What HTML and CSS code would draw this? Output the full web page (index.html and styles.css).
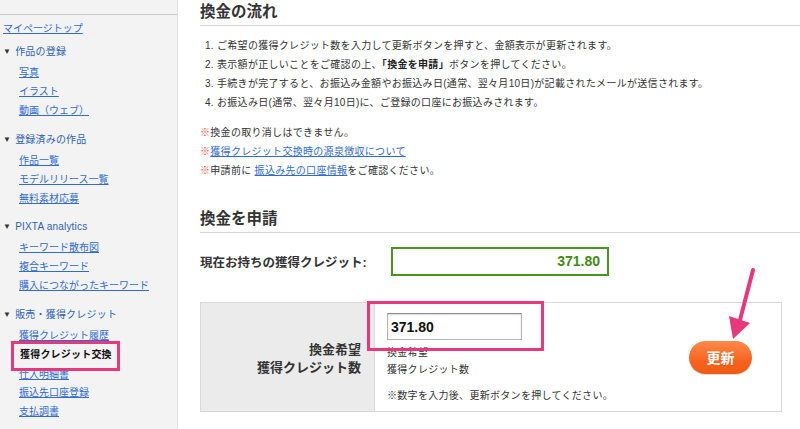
FILE: index.html
```html
<!DOCTYPE html>
<html lang="ja">
<head>
<meta charset="utf-8">
<link rel="stylesheet" href="styles.css">
</head>
<body>
<div class="page">
  <aside class="sidebar">
    <div class="side-inner">
      <a class="top-link" href="#">マイページトップ</a>
      <div class="group">
        <div class="group-head"><span class="tri">▼</span>作品の登録</div>
        <ul>
          <li><a href="#">写真</a></li>
          <li><a href="#">イラスト</a></li>
          <li><a href="#">動画（ウェブ）</a></li>
        </ul>
      </div>
      <div class="group">
        <div class="group-head"><span class="tri">▼</span>登録済みの作品</div>
        <ul>
          <li><a href="#">作品一覧</a></li>
          <li><a href="#">モデルリリース一覧</a></li>
          <li><a href="#">無料素材応募</a></li>
        </ul>
      </div>
      <div class="group">
        <div class="group-head"><span class="tri">▼</span>PIXTA analytics</div>
        <ul>
          <li><a href="#">キーワード散布図</a></li>
          <li><a href="#">複合キーワード</a></li>
          <li><a href="#">購入につながったキーワード</a></li>
        </ul>
      </div>
      <div class="group">
        <div class="group-head"><span class="tri">▼</span>販売・獲得クレジット</div>
        <ul>
          <li><a href="#">獲得クレジット履歴</a></li>
          <li class="active"><span>獲得クレジット交換</span></li>
          <li class="after-active"><a href="#">仕入明細書</a></li>
          <li><a href="#">振込先口座登録</a></li>
          <li><a href="#">支払調書</a></li>
        </ul>
      </div>
    </div>
  </aside>
  <main class="main">
    <h2 class="sec-title">換金の流れ</h2>
    <div class="steps">
      <p>1. ご希望の獲得クレジット数を入力して更新ボタンを押すと、金額表示が更新されます。</p>
      <p>2. 表示額が正しいことをご確認の上、<b>「換金を申請」</b>ボタンを押してください。</p>
      <p>3. 手続きが完了すると、お振込み金額やお振込み日(通常、翌々月10日)が記載されたメールが送信されます。</p>
      <p>4. お振込み日(通常、翌々月10日)に、ご登録の口座にお振込みされます。</p>
    </div>
    <div class="notes">
      <p><span class="mark">※</span>換金の取り消しはできません。</p>
      <p><span class="mark">※</span><a href="#">獲得クレジット交換時の源泉徴収について</a></p>
      <p><span class="mark">※</span>申請前に <a href="#">振込み先の口座情報</a>をご確認ください。</p>
    </div>
    <h2 class="sec-title second">換金を申請</h2>
    <div class="credit-row">
      <div class="credit-label">現在お持ちの獲得クレジット:</div>
      <div class="credit-box">371.80</div>
    </div>
    <div class="apply">
      <div class="apply-label">換金希望<br>獲得クレジット数</div>
      <div class="apply-body">
        <div class="apply-form">
          <div class="input-wrap">
            <input class="amount" type="text" value="371.80">
            <div class="highlight"></div>
          </div>
          <div class="sub">換金希望<br>獲得クレジット数</div>
          <div class="hint">※数字を入力後、更新ボタンを押してください。</div>
        </div>
        <button class="update">更新</button>
      </div>
    </div>
  </main>
</div>
<svg class="arrow" width="40" height="80" viewBox="720 265 40 80">
  <line x1="753" y1="270" x2="740" y2="320" stroke="#e8387c" stroke-width="4" stroke-linecap="round"/>
  <polygon points="729,316 750,323 733,339" fill="#e8387c"/>
</svg>
</body>
</html>
```

FILE: styles.css
```css
* { box-sizing: border-box; }
html, body { margin: 0; padding: 0; }
body {
  font-family: "Liberation Sans", "Noto Sans CJK JP", sans-serif;
  color: #333;
  background: #fff;
  width: 800px;
  height: 429px;
  overflow: hidden;
  position: relative;
}
.page { display: flex; height: 429px; }
.sidebar {
  width: 178px;
  flex: none;
  background: #f4f3f3;
  border-right: 1px solid #e2e2e2;
  padding-top: 14px;
}
.side-inner {
  border-top: 1px solid #c9c9c9;
  font-size: 10px;
  line-height: 19px;
  padding-top: 4px;
}
a { color: #2f6bd3; text-decoration: underline; }
.top-link { display: block; padding-left: 3px; margin-bottom: 4px; }
.group { margin-bottom: 9.5px; }
.group-head { color: #2c62bd; padding-left: 3px; letter-spacing: 0.2px; }
.tri { font-size: 8px; color: #333; margin-right: 4px; vertical-align: 1px; }
.group ul { list-style: none; margin: 2px 0 0; padding: 0 0 0 19px; }
.group li { height: 19px; }
.group li.active { position: relative; font-weight: bold; color: #111; padding-left: 1px; letter-spacing: 0.2px; }
.group li.active::after {
  content: "";
  position: absolute;
  left: -8px;
  top: -4px;
  width: 103px;
  height: 24px;
  border: 3px solid #e8387c;
}
.group li.after-active { padding-top: 1px; }
.main { flex: 1; padding-left: 22px; }
.sec-title {
  margin: 0;
  font-size: 15.5px;
  line-height: 23px;
  font-weight: bold;
  color: #333;
  padding-bottom: 2px;
  border-bottom: 1px solid #d4d4d4;
}
.sec-title.second { margin-top: 27px; }
.steps { margin-top: 10px; padding-left: 5px; font-size: 10px; line-height: 19px; letter-spacing: 0.3px; }
.steps p, .notes p { margin: 0; }
.steps b { color: #222; }
.notes { margin-top: 11px; font-size: 10px; line-height: 19px; letter-spacing: 0.3px; }
.mark { color: #ff3b2f; }
.credit-row { display: flex; align-items: center; margin-top: 14px; }
.credit-label { width: 191px; font-size: 12.5px; font-weight: bold; color: #333; }
.credit-box {
  width: 218px;
  height: 29px;
  border: 2px solid #4a961c;
  color: #3e8c14;
  font-weight: bold;
  font-size: 14px;
  text-align: right;
  padding-right: 7px;
  line-height: 25px;
}
.apply {
  display: flex;
  margin-top: 26px;
  margin-right: 18px;
  border: 1px solid #d9d9d9;
  height: 110px;
}
.apply-label {
  width: 174px;
  flex: none;
  background: #ebebeb;
  border-right: 1px solid #d9d9d9;
  text-align: right;
  font-weight: bold;
  font-size: 13px;
  line-height: 18px;
  padding: 3px 13px 0 0;
  display: flex;
  align-items: center;
  justify-content: flex-end;
  color: #333;
}
.apply-body {
  flex: 1;
  display: flex;
  justify-content: space-between;
  align-items: center;
  padding: 0 29px 0 12px;
}
.apply-form { align-self: flex-start; padding-top: 10px; font-size: 10px; letter-spacing: 0.3px; }
.input-wrap { position: relative; width: 135px; height: 27px; }
.amount {
  display: block;
  width: 135px;
  height: 27px;
  margin: 0;
  border: 1px solid #b4b4b4;
  border-top-color: #8a8a8a;
  box-shadow: inset 0 1px 2px rgba(0,0,0,0.15);
  font-family: "Liberation Sans", sans-serif;
  font-size: 14px;
  font-weight: bold;
  color: #111;
  padding: 0 3px;
  background: #fff;
  letter-spacing: 0;
}
.highlight {
  position: absolute;
  left: -20px;
  top: -12px;
  width: 177px;
  height: 50px;
  border: 3px solid #e8387c;
}
.sub { margin-top: 4px; line-height: 17px; color: #333; }
.hint { margin-top: 9px; line-height: 17px; color: #333; }
.update {
  width: 63px;
  height: 33px;
  border: none;
  border-radius: 17px;
  background: linear-gradient(#ff8a4a, #f76420 60%, #f05a14);
  color: #fff;
  font-family: "Noto Sans CJK JP", sans-serif;
  font-weight: bold;
  font-size: 14px;
  padding: 0;
  box-shadow: 0 1px 1px rgba(0,0,0,0.15);
}
.arrow { position: absolute; left: 720px; top: 265px; }
```
